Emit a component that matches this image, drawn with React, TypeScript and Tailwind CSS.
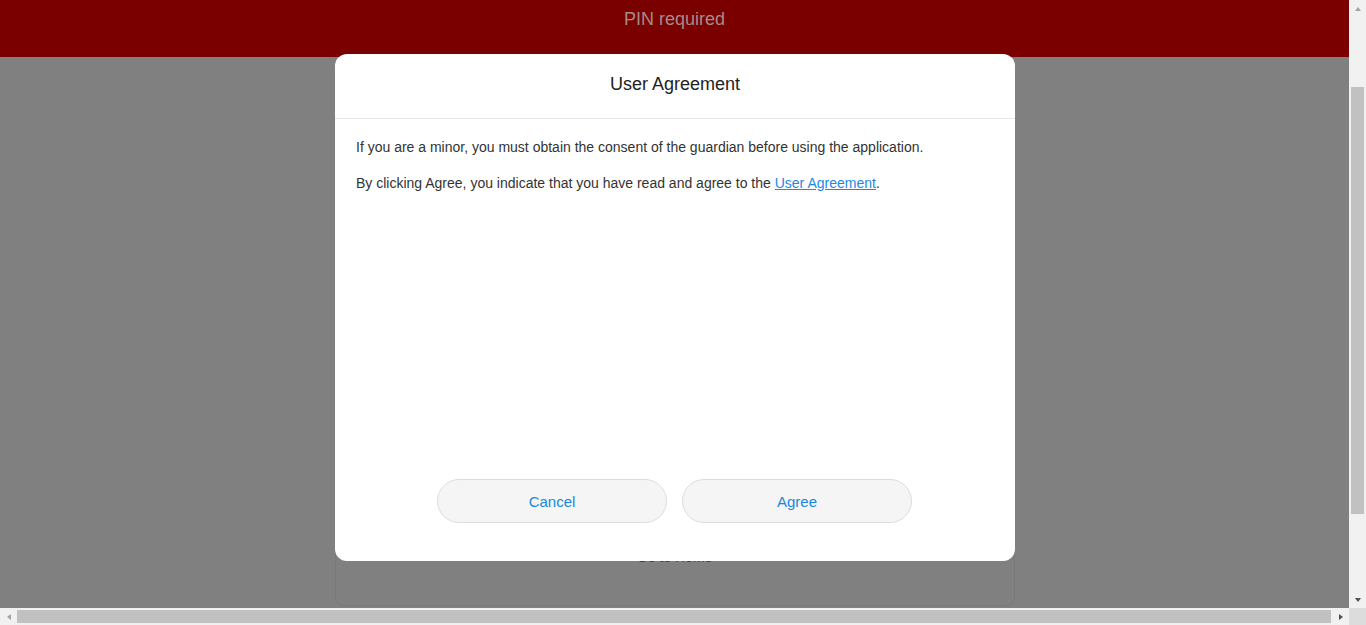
import React from 'react';

function Arrow({ dir, color }: { dir: 'up' | 'down' | 'left' | 'right'; color: string }) {
  const pts = {
    up: '1,6 4,2 7,6',
    down: '1,2 4,6 7,2',
    left: '6,1 2,4 6,7',
    right: '2,1 6,4 2,7',
  }[dir];
  return (
    <svg width="8" height="8" viewBox="0 0 8 8">
      <polygon points={pts} fill={color} />
    </svg>
  );
}

export default function App() {
  return (
    <div
      className="w-[1366px] h-[625px] flex flex-col overflow-hidden bg-[#808080]"
      style={{ fontFamily: '"Liberation Sans", Arial, sans-serif' }}
    >
      <div className="flex flex-1 min-h-0">
        <div className="relative flex-1 flex flex-col bg-[#808080]">
          <header className="h-[57px] bg-[#7a0000] flex justify-center pt-[6px]">
            <span className="text-[18px] text-[#a88a8a]">PIN required</span>
          </header>

          <div className="flex-1 flex flex-col items-center pt-[24px] pb-[2px]">
            <div className="w-[680px] flex-1 rounded-[8px] border border-[#787878] flex flex-col justify-end items-center pb-[38px]">
              <span className="text-[14px] leading-[20px] text-[#0b4a80]">Go to Home</span>
            </div>
          </div>

          <div className="absolute top-[54px] left-[335px] w-[680px] h-[507px] bg-white rounded-[12px] flex flex-col">
            <div className="h-[65px] flex items-center justify-center border-b border-[#e8e8e8] pb-[4px]">
              <h2 className="text-[18px] text-[#222]">User Agreement</h2>
            </div>
            <div className="flex-1 px-[21px] pt-[18px] text-[14px] leading-[20px] text-[#333] flex flex-col gap-[16px]">
              <p>If you are a minor, you must obtain the consent of the guardian before using the application.</p>
              <p>
                By clicking Agree, you indicate that you have read and agree to the{' '}
                <a className="text-[#1e88e5] underline">User Agreement</a>.
              </p>
            </div>
            <div className="flex justify-center gap-[15px] pb-[38px] pr-[1px]">
              <button className="w-[230px] h-[44px] rounded-full bg-[#f5f5f5] border border-[#dddddd] pt-[3px] text-[15px] text-[#1a87e0]">
                Cancel
              </button>
              <button className="w-[230px] h-[44px] rounded-full bg-[#f5f5f5] border border-[#dddddd] pt-[3px] text-[15px] text-[#1a87e0]">
                Agree
              </button>
            </div>
          </div>
        </div>

        <div className="w-[17px] bg-[#f1f1f1] flex flex-col">
          <div className="h-[17px] flex items-center justify-center">
            <Arrow dir="up" color="#a3a3a3" />
          </div>
          <div className="flex-1 px-[2px] pt-[70px] pb-[77px] flex flex-col">
            <div className="flex-1 bg-[#c1c1c1]" />
          </div>
          <div className="h-[17px] flex items-center justify-center">
            <Arrow dir="down" color="#505050" />
          </div>
        </div>
      </div>

      <div className="h-[17px] flex bg-[#f1f1f1]">
        <div className="w-[17px] flex items-center justify-center">
          <Arrow dir="left" color="#a3a3a3" />
        </div>
        <div className="flex-1 py-[2px] pr-[1px] flex">
          <div className="flex-1 bg-[#c1c1c1]" />
        </div>
        <div className="w-[17px] flex items-center justify-center">
          <Arrow dir="right" color="#505050" />
        </div>
        <div className="w-[17px] bg-[#dcdcdc]" />
      </div>
    </div>
  );
}
